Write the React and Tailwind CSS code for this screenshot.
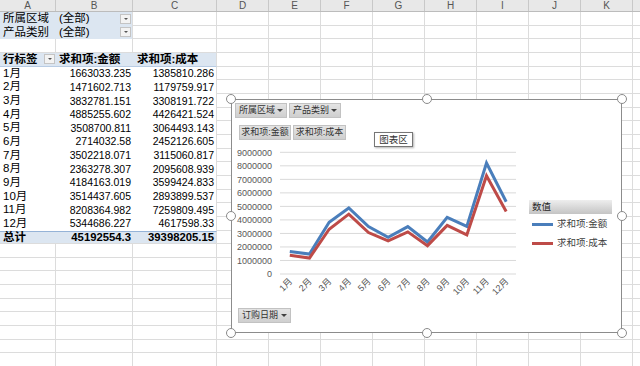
import React from 'react';

const months = ['1月', '2月', '3月', '4月', '5月', '6月', '7月', '8月', '9月', '10月', '11月', '12月'];

const amount = [
  '1663033.235', '1471602.713', '3832781.151', '4885255.602', '3508700.811', '2714032.58',
  '3502218.071', '2363278.307', '4184163.019', '3514437.605', '8208364.982', '5344686.227',
];
const cost = [
  '1385810.286', '1179759.917', '3308191.722', '4426421.524', '3064493.143', '2452126.605',
  '3115060.817', '2095608.939', '3599424.833', '2893899.537', '7259809.495', '4617598.33',
];

const tailCols = ['D', 'E', 'F', 'G', 'H', 'I', 'J', 'K'];

// plot geometry inside the chart frame
const X0 = 57.8;
const DX = 19.67;
const Y0 = 174;
const YS = 13.52; // px per million

const px = (i) => X0 + i * DX;
const py = (v) => Y0 - (parseFloat(v) / 1000000) * YS;

const Arrow = () => (
  <span className="w-0 h-0 border-x-[3px] border-x-transparent border-t-[3px] border-t-[#404040]" />
);

const DropBox = () => (
  <span className="w-[11px] h-[10px] shrink-0 flex items-center justify-center bg-[#f3f3f3] border border-[#c4c4c4]">
    <span className="w-0 h-0 border-x-[2px] border-x-transparent border-t-[2.5px] border-t-[#555]" />
  </span>
);

const Tail = () => (
  <>
    {tailCols.map((k) => (
      <div key={k} className="w-[52px] shrink-0 h-full border-r border-b border-[#dcdcdc]" />
    ))}
    <div className="flex-1 h-full border-b border-[#dcdcdc]" />
  </>
);

const Row = ({ children }) => (
  <div className="flex h-[13.67px]">
    {children}
    <Tail />
  </div>
);

const Plain = ({ w }) => <div className={`${w} shrink-0 h-full border-r border-b border-[#dcdcdc]`} />;

function Sheet() {
  return (
    <div className="flex flex-col">
      {/* column headers */}
      <div className="flex h-[12px] bg-[#e8e8e8] border-b border-[#bcbcbc] text-[10px] text-[#555] leading-none">
        <div className="w-[56px] shrink-0 flex items-center justify-center border-r border-[#c8c8c8]">A</div>
        <div className="w-[77px] shrink-0 flex items-center justify-center border-r border-[#c8c8c8]">B</div>
        <div className="w-[84px] shrink-0 flex items-center justify-center border-r border-[#c8c8c8]">C</div>
        {tailCols.map((k) => (
          <div key={k} className="w-[52px] shrink-0 flex items-center justify-center border-r border-[#c8c8c8]">
            {k}
          </div>
        ))}
        <div className="flex-1" />
      </div>

      {/* report filters */}
      {[
        ['所属区域', '(全部)'],
        ['产品类别', '(全部)'],
      ].map(([label, val]) => (
        <Row key={label}>
          <div className="w-[56px] shrink-0 h-full bg-[#dce6f1] flex items-center pl-[3px] text-[11.5px] leading-none">
            {label}
          </div>
          <div className="w-[77px] shrink-0 h-full bg-[#dce6f1] border-r border-[#dcdcdc] flex items-center justify-between pl-[3px] pr-[1px] text-[11.5px] leading-none">
            <span>{val}</span>
            <DropBox />
          </div>
          <Plain w="w-[84px]" />
        </Row>
      ))}

      {/* empty row */}
      <Row>
        <Plain w="w-[56px]" />
        <Plain w="w-[77px]" />
        <Plain w="w-[84px]" />
      </Row>

      {/* pivot header */}
      <Row>
        <div className="w-[56px] shrink-0 h-full bg-[#dce6f1] border-b border-[#b8cce4] flex items-center justify-between pl-[3px] pr-[1px] text-[11.5px] font-bold leading-none">
          <span>行标签</span>
          <DropBox />
        </div>
        <div className="w-[77px] shrink-0 h-full bg-[#dce6f1] border-b border-[#b8cce4] flex items-center pl-[3px] text-[11.5px] font-bold leading-none">
          求和项:金额
        </div>
        <div className="w-[84px] shrink-0 h-full bg-[#dce6f1] border-b border-[#b8cce4] border-r border-r-[#dcdcdc] flex items-center pl-[4px] text-[11.5px] font-bold leading-none">
          求和项:成本
        </div>
      </Row>

      {/* month rows */}
      {months.map((m, i) => (
        <Row key={m}>
          <div className="w-[56px] shrink-0 h-full bg-white flex items-center pl-[3px] text-[11.5px] leading-none">{m}</div>
          <div className="w-[77px] shrink-0 h-full bg-white flex items-center justify-end pr-[2px] text-[10.5px] leading-none">
            {amount[i]}
          </div>
          <div className="w-[84px] shrink-0 h-full bg-white border-r border-[#dcdcdc] flex items-center justify-end pr-[2px] text-[10.5px] leading-none">
            {cost[i]}
          </div>
        </Row>
      ))}

      {/* grand total */}
      <Row>
        <div className="w-[56px] shrink-0 h-full bg-[#dce6f1] border-t border-[#95b3d7] border-b border-b-[#dcdcdc] flex items-center pl-[3px] text-[11.5px] font-bold leading-none">
          总计
        </div>
        <div className="w-[77px] shrink-0 h-full bg-[#dce6f1] border-t border-[#95b3d7] border-b border-b-[#dcdcdc] flex items-center justify-end pr-[2px] text-[11.3px] font-bold leading-none">
          45192554.3
        </div>
        <div className="w-[84px] shrink-0 h-full bg-[#dce6f1] border-t border-[#95b3d7] border-b border-b-[#dcdcdc] border-r border-r-[#dcdcdc] flex items-center justify-end pr-[2px] text-[11.3px] font-bold leading-none">
          39398205.15
        </div>
      </Row>

      {/* empty rows */}
      {Array.from({ length: 9 }).map((_, i) => (
        <Row key={i}>
          <Plain w="w-[56px]" />
          <Plain w="w-[77px]" />
          <Plain w="w-[84px]" />
        </Row>
      ))}
    </div>
  );
}

const FieldButton = ({ label, arrow, w }) => (
  <div
    className={`${w} h-[15px] flex items-center whitespace-nowrap bg-gradient-to-b from-[#e4e4e4] to-[#cfcfcf] border border-[#c2c2c2] text-[9px] text-[#333] leading-none ${
      arrow ? 'justify-between px-[3px]' : 'justify-center px-0'
    }`}
  >
    <span>{label}</span>
    {arrow && <Arrow />}
  </div>
);

function PivotChart() {
  const handles = [
    'left-0 top-0',
    'left-1/2 top-0',
    'left-full top-0',
    'left-0 top-1/2',
    'left-full top-1/2',
    'left-0 top-full',
    'left-1/2 top-full',
    'left-full top-full',
  ];

  const blue = amount.map((v, i) => `${px(i)},${py(v)}`).join(' ');
  const red = cost.map((v, i) => `${px(i)},${py(v)}`).join(' ');

  return (
    <div className="absolute left-[231px] top-[99px] w-[391px] h-[234px]">
      <div className="relative w-full h-full bg-white border border-[#8c8c8c]">
        <svg className="absolute inset-0" width="389" height="232">
          {Array.from({ length: 10 }).map((_, k) => {
            const y = Y0 - k * YS;
            return (
              <g key={k}>
                <line x1="48" x2="284" y1={y} y2={y} stroke="#d9d9d9" strokeWidth="1" />
                <text
                  x="40"
                  y={y + 3.2}
                  textAnchor="end"
                  fontSize="9"
                  fill="#595959"
                  fontFamily="Liberation Sans, sans-serif"
                >
                  {k * 1000000}
                </text>
              </g>
            );
          })}
          {months.map((m, i) => (
            <text
              key={m}
              transform={`translate(${px(i) + 3}, ${182}) rotate(-45)`}
              textAnchor="end"
              fontSize="9"
              fill="#595959"
              fontFamily="Liberation Sans, Noto Sans CJK SC, sans-serif"
            >
              {m}
            </text>
          ))}
          <polyline points={blue} fill="none" stroke="#4a7ebb" strokeWidth="3" />
          <polyline points={red} fill="none" stroke="#be4b48" strokeWidth="3" />
        </svg>

        {/* field buttons */}
        <div className="relative flex gap-[2px] pt-[3px] pl-[3px]">
          <FieldButton label="所属区域" arrow w="w-[52px]" />
          <FieldButton label="产品类别" arrow w="w-[52px]" />
        </div>
        <div className="relative flex gap-[2px] mt-[7px] pl-[7px]">
          <FieldButton label="求和项:金额" w="w-[52px]" />
          <FieldButton label="求和项:成本" w="w-[53px]" />
        </div>

        {/* tooltip */}
        <div className="absolute left-[142px] top-[32px] w-[39px] h-[15px] bg-white border border-[#767676] shadow-[1px_1px_2px_rgba(0,0,0,0.3)] flex items-center justify-center text-[9.5px] text-[#333] leading-none">
          图表区
        </div>

        {/* legend */}
        <div className="absolute left-[297px] top-[100px] w-[83px] flex flex-col">
          <div className="h-[14px] flex items-center pl-[3px] bg-gradient-to-b from-[#eeeeee] to-[#c4c4c4] text-[9.5px] text-[#262626] leading-none">
            数值
          </div>
          <div className="flex items-center gap-[4px] mt-[4px] pl-[3px] h-[12px]">
            <span className="w-[21px] h-[3px] bg-[#4a7ebb]" />
            <span className="text-[9.5px] text-[#404040] leading-none">求和项:金额</span>
          </div>
          <div className="flex items-center gap-[4px] mt-[7px] pl-[3px] h-[12px]">
            <span className="w-[21px] h-[3px] bg-[#be4b48]" />
            <span className="text-[9.5px] text-[#404040] leading-none">求和项:成本</span>
          </div>
        </div>

        {/* axis field button */}
        <div className="absolute left-[6px] top-[208px]">
          <FieldButton label="订购日期" arrow w="w-[53px]" />
        </div>
      </div>

      {handles.map((h) => (
        <span
          key={h}
          className={`absolute ${h} w-[10px] h-[10px] -translate-x-1/2 -translate-y-1/2 rounded-full bg-white border border-[#8a8a8a]`}
        />
      ))}
    </div>
  );
}

export default function App() {
  return (
    <div className="relative w-[640px] h-[366px] overflow-hidden bg-white text-black font-['Liberation_Sans','Noto_Sans_CJK_SC',sans-serif]">
      <Sheet />
      <PivotChart />
    </div>
  );
}
